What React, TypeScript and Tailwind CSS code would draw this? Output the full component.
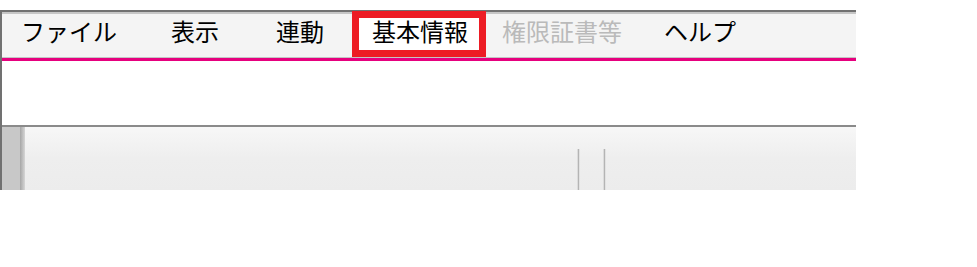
const menuItems = [
  { label: "ファイル", gap: "ml-[19px]" },
  { label: "表示", gap: "ml-[54px]" },
  { label: "連動", gap: "ml-[57px]" },
  { label: "基本情報", gap: "ml-[48px]", highlighted: true },
  { label: "権限証書等", gap: "ml-[34px]", disabled: true },
  { label: "ヘルプ", gap: "ml-[42px]" },
]

const MenuBar = () => {
  return (
    <div className="flex h-[43px] items-start bg-[#f4f4f4] pt-[5px]">
      {menuItems.map((item) => (
        <div key={item.label} className={`relative ${item.gap}`}>
          {item.highlighted && (
            <div className="absolute -top-[8px] -left-[20px] h-[46px] w-[134px] border-[7px] border-[#ed1c24] bg-white" />
          )}
          <span
            className={`relative text-[24px] leading-[24px] whitespace-nowrap ${
              item.disabled ? "text-[#bababa]" : "text-black"
            }`}
          >
            {item.label}
          </span>
        </div>
      ))}
    </div>
  )
}

const Separator = () => (
  <div className="flex h-[41px] w-[3px]">
    <div className="w-px bg-[#dcdcdc]" />
    <div className="w-px bg-[#b4b4b4]" />
    <div className="w-px bg-[#e2e2e2]" />
  </div>
)

export default function App() {
  return (
    <div
      className="h-[267px] w-[977px] bg-white pt-[10px]"
      style={{ fontFamily: '"Noto Sans CJK JP", "Noto Sans", sans-serif' }}
    >
      <div className="flex w-[856px] flex-col border-t-[2px] border-l-[2px] border-[#717171]">
        <div className="border-t-[2px] border-[#c6c6c6]">
          <MenuBar />
        </div>
        <div className="h-px bg-[#c4c4c4]" />
        <div className="h-[3px] bg-[#e6007e]" />
        <div className="h-[64px] bg-white" />
        <div className="h-[2px] bg-[#8a8a8a]" />
        <div className="flex h-[63px]">
          <div className="w-[18px] bg-[#c8c8c8]" />
          <div className="w-[5px] bg-gradient-to-r from-[#a6a6a6] to-[#d6d6d6]" />
          <div className="flex flex-1 flex-col bg-gradient-to-b from-[#f7f7f7] via-[#eeeeee] to-[#ececec]">
            <div className="h-[22px]" />
            <div className="flex flex-1">
              <div className="w-[552px]" />
              <Separator />
              <div className="w-[23px]" />
              <Separator />
            </div>
          </div>
        </div>
      </div>
    </div>
  )
}
